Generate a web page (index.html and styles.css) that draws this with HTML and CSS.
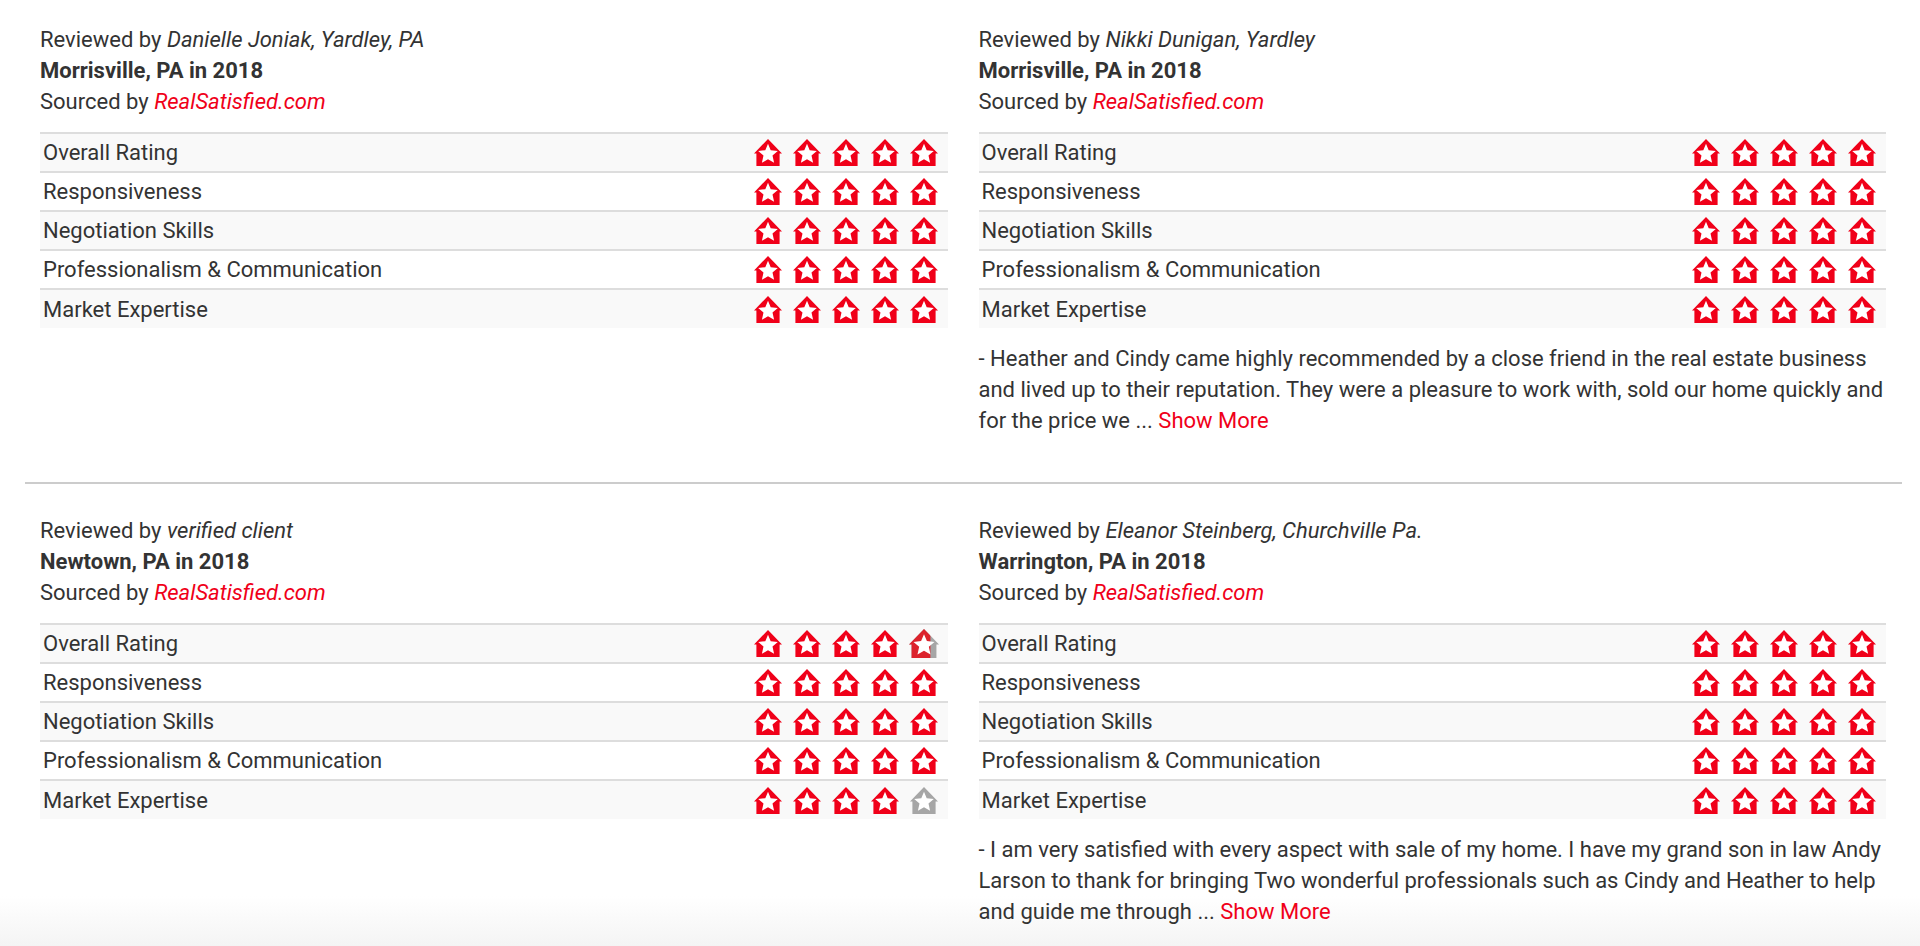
FILE: index.html
```html
<!DOCTYPE html>
<html lang="en">
<head>
  <meta charset="UTF-8">
  <meta name="viewport" content="width=device-width, initial-scale=1.0">
  <title>Client Reviews</title>
  <link rel="stylesheet" href="styles.css">
</head>
<body>
  <!-- Rating icons -->
  <svg class="icon-defs" aria-hidden="true">
    <defs>
      <path id="house" d="M14 0 L28 14.4 H25.6 V27 H2.4 V14.4 H0 Z"/>
      <path id="star" d="M14 4.8 L16.7 11.2 L23.8 12 L18.5 16.6 L20.1 23.8 L14 20.2 L7.9 23.8 L9.5 16.6 L4.2 12 L11.3 11.2 Z"/>
      <symbol id="full" viewBox="0 0 28 27">
        <use href="#house" fill="#f00019"/>
        <use href="#star" fill="#fff"/>
      </symbol>
      <symbol id="empty" viewBox="0 0 28 27">
        <use href="#house" fill="#a6a6a6"/>
        <use href="#star" fill="#fff"/>
      </symbol>
      <clipPath id="partClip"><rect x="0" y="0" width="20" height="27"/></clipPath>
      <symbol id="part" viewBox="0 0 28 27">
        <use href="#house" fill="#a6a6a6"/>
        <use href="#house" fill="#dc232d" clip-path="url(#partClip)"/>
        <use href="#star" fill="#fff"/>
      </symbol>
    </defs>
  </svg>

  <main class="reviews" id="reviews"></main>

  <script>
    const labels = ["Overall Rating", "Responsiveness", "Negotiation Skills", "Professionalism & Communication", "Market Expertise"];

    const reviews = [
      { name: "Danielle Joniak, Yardley, PA", place: "Morrisville, PA in 2018", scores: [5, 5, 5, 5, 5] },
      {
        name: "Nikki Dunigan, Yardley", place: "Morrisville, PA in 2018", scores: [5, 5, 5, 5, 5],
        text: "- Heather and Cindy came highly recommended by a close friend in the real estate business and lived up to their reputation. They were a pleasure to work with, sold our home quickly and for the price we ..."
      },
      { name: "verified client", place: "Newtown, PA in 2018", scores: [4.7, 5, 5, 5, 4] },
      {
        name: "Eleanor Steinberg, Churchville Pa.", place: "Warrington, PA in 2018", scores: [5, 5, 5, 5, 5],
        text: "- I am very satisfied with every aspect with sale of my home. I have my grand son in law Andy Larson to thank for bringing Two wonderful professionals such as Cindy and Heather to help and guide me through ..."
      }
    ];

    // Build the five icons for one score
    function icons(score) {
      let out = "";
      for (let i = 0; i < 5; i++) {
        const type = score >= i + 1 ? "full" : (score > i ? "part" : "empty");
        out += `<svg class="icon icon-${type}" aria-hidden="true"><use href="#${type}"/></svg>`;
      }
      return `<div class="icons" role="img" aria-label="${score} out of 5">${out}</div>`;
    }

    function reviewHtml(review) {
      const rows = review.scores.map((score, i) => `
        <tr>
          <th scope="row">${labels[i].replace("&", "&amp;")}</th>
          <td>${icons(score)}</td>
        </tr>`).join("");
      const text = review.text ? `<p class="review-text">${review.text} <a href="#">Show More</a></p>` : "";
      return `
        <article class="review">
          <div class="review-header">
            <div>Reviewed by <em>${review.name}</em></div>
            <div><strong>${review.place}</strong></div>
            <div>Sourced by <a href="#"><em>RealSatisfied.com</em></a></div>
          </div>
          <table class="ratings"><tbody>${rows}</tbody></table>
          ${text}
        </article>`;
    }

    // Two reviews per row
    let html = "";
    for (let i = 0; i < reviews.length; i += 2) {
      html += `<section class="review-row">${reviewHtml(reviews[i])}${reviewHtml(reviews[i + 1])}</section>`;
    }
    document.getElementById("reviews").innerHTML = html;
  </script>
</body>
</html>
```

FILE: styles.css
```css
* {
  box-sizing: border-box;
}
body {
  margin: 0;
  min-height: 100vh;
  font-family: Roboto, Arial, sans-serif;
  font-size: 22px;
  line-height: 31px;
  color: #333;
  background: #fff linear-gradient(#fff, #f4f4f4) bottom / 100% 50px no-repeat;
}
a {
  color: #f00019;
  text-decoration: none;
}
a:hover {
  text-decoration: underline;
}
.icon-defs {
  position: absolute;
  width: 0;
  height: 0;
}
.reviews {
  padding: 0 18px 0 25px;
}
.review-row {
  display: grid;
  grid-template-columns: 1fr 1fr;
  padding: 24px 0 46px;
}
.review-row + .review-row {
  border-top: 2px solid #ccc;
  padding: 31px 0 16px;
}
.review {
  padding: 0 16px 0 15px;
}
.review-header {
  margin-bottom: 15px;
}
.ratings {
  width: 100%;
  border-collapse: collapse;
}
.ratings th, .ratings td {
  height: 39px;
  padding: 0 3px;
  border-top: 2px solid #ddd;
  font-weight: normal;
  text-align: left;
}
.ratings tr:nth-child(odd) {
  background-color: #f9f9f9;
}
.icons {
  display: flex;
  justify-content: flex-end;
  align-items: center;
  gap: 11px;
  padding-right: 7px;
}
.icon {
  display: block;
  width: 28px;
  height: 27px;
}
.icon-part {
  width: 30px;
  height: 29px;
  margin: -1px;
}
.review-text {
  margin: 15px 0 0;
}
```
